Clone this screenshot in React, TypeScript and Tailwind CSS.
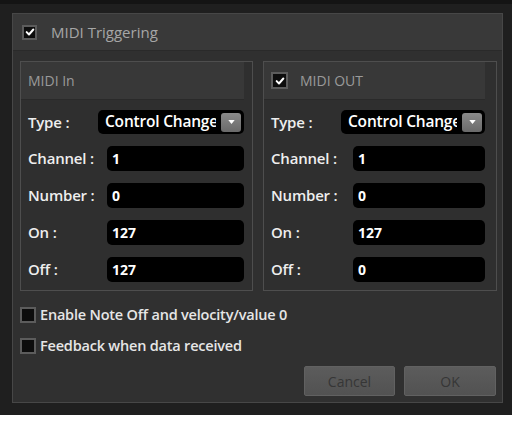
import React from "react";

function Check({ checked, className = "" }: { checked?: boolean; className?: string }) {
    return (
        <div className={`flex items-center justify-center bg-[#0d0d0d] border-2 border-[#5c5c5c] ${className}`}>
            {checked && (
                <svg viewBox="0 0 12 12" className="w-[10px] h-[10px]">
                    <path d="M2 6.2 L4.8 9 L10 3" fill="none" stroke="#ffffff" strokeWidth="2.4" strokeLinecap="round" strokeLinejoin="round" />
                </svg>
            )}
        </div>
    );
}

function Dropdown({ labelW }: { labelW: string }) {
    return (
        <div className="flex items-center h-[24px]">
            <div className={`${labelW} shrink-0 text-[15px] font-semibold text-[#eeeeee] tracking-[-0.2px]`}>Type :</div>
            <div className="flex-1 h-[24px] bg-black rounded-[5px] flex items-center pl-[7px] pr-[3px] overflow-hidden">
                <span className="flex-1 mr-[5px] overflow-hidden whitespace-nowrap text-[15.5px] font-semibold text-white tracking-[-0.2px]">Control Change</span>
                <div className="w-[20px] h-[19px] shrink-0 rounded-[3px] bg-gradient-to-b from-[#8a8a8a] to-[#6a6a6a] flex items-center justify-center">
                    <svg viewBox="0 0 8 5" className="w-[7px] h-[4px]">
                        <path d="M0 0 L8 0 L4 5 Z" fill="#ffffff" />
                    </svg>
                </div>
            </div>
        </div>
    );
}

function Field({ label, value, labelW }: { label: string; value: string; labelW: string }) {
    return (
        <div className="flex items-center h-[25px]">
            <div className={`${labelW} shrink-0 text-[15px] font-semibold text-[#eeeeee] tracking-[-0.2px]`}>{label}</div>
            <div className="flex-1 h-[25px] bg-black rounded-[5px] flex items-center px-[5px] text-[14px] font-bold text-white">
                {value}
            </div>
        </div>
    );
}

function Group({
    title,
    checkable,
    values,
    className,
    ddW,
    fieldW,
}: {
    title: string;
    checkable?: boolean;
    values: string[];
    className: string;
    ddW: string;
    fieldW: string;
}) {
    const labels = ["Channel :", "Number :", "On :", "Off :"];
    return (
        <div className={`border border-[#4e4e4e] bg-[#2f2f2f] flex flex-col ${className}`}>
            <div className="h-[38px] bg-[#383838] border-b border-[#2a2a2a] flex items-center px-[7px] gap-[12px]">
                {checkable && <Check checked className="w-[17px] h-[17px]" />}
                <span className="text-[14px] text-[#9a9a9a]">{title}</span>
            </div>
            <div className="flex flex-col gap-[12px] pt-[10px] pb-[8px] pl-[7px]">
                <Dropdown labelW={ddW} />
                {labels.map((l, i) => (
                    <Field key={l} label={l} value={values[i]} labelW={fieldW} />
                ))}
            </div>
        </div>
    );
}

export default function App() {
    return (
        <div className="w-[518px] h-[421px] bg-white" style={{ fontFamily: '"Open Sans", "Liberation Sans", sans-serif' }}>
            <div className="w-[512px] h-[415px] bg-[#1f1f1f] border-t-4 border-[#141414] pt-[9px] pl-[12px]">
                <div className="w-[491px] h-[390px] bg-[#303030] border border-[#474747] flex flex-col">
                    {/* Header */}
                    <div className="h-[37px] bg-[#393939] border-b border-[#2a2a2a] flex items-center pl-[9px] gap-[14px] shrink-0">
                        <Check checked className="w-[15px] h-[15px]" />
                        <span className="text-[15px] text-[#a6a6a6]">MIDI Triggering</span>
                    </div>

                    <div className="flex gap-[10px] pl-[7px] pt-[10px]">
                        <Group
                            title="MIDI In"
                            values={["1", "0", "127", "127"]}
                            className="w-[233px] pr-[8px]"
                            ddW="w-[70px]"
                            fieldW="w-[79px]"
                        />
                        <Group
                            title="MIDI OUT"
                            checkable
                            values={["1", "0", "127", "0"]}
                            className="w-[234px] pr-[11px]"
                            ddW="w-[70px]"
                            fieldW="w-[82px]"
                        />
                    </div>

                    {/* Options */}
                    <div className="flex flex-col gap-[11px] pl-[7px] pt-[14px]">
                        <label className="flex items-center gap-[4px] h-[20px]">
                            <Check className="w-[16px] h-[16px]" />
                            <span className="text-[14.5px] font-semibold text-[#e6e6e6] tracking-[-0.2px]">Enable Note Off and velocity/value 0</span>
                        </label>
                        <label className="flex items-center gap-[4px] h-[20px]">
                            <Check className="w-[16px] h-[16px]" />
                            <span className="text-[14.5px] font-semibold text-[#e6e6e6] tracking-[-0.2px]">Feedback when data received</span>
                        </label>
                    </div>

                    {/* Buttons */}
                    <div className="flex justify-end gap-[9px] pr-[6px] pt-[10px]">
                        <button className="w-[91px] h-[30px] rounded-[2px] bg-gradient-to-b from-[#5c5c5c] to-[#525252] border border-[#616161] text-[14px] text-[#363636]">
                            Cancel
                        </button>
                        <button className="w-[92px] h-[30px] rounded-[2px] bg-gradient-to-b from-[#5c5c5c] to-[#525252] border border-[#616161] text-[14px] text-[#363636]">
                            OK
                        </button>
                    </div>
                </div>
            </div>
        </div>
    );
}
